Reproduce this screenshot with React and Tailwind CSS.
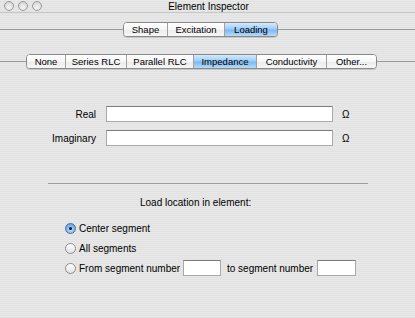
import React from "react";

const topTabs = [
  { label: "Shape", w: "w-[43px]" },
  { label: "Excitation", w: "w-[57px]" },
  { label: "Loading", w: "w-[53px]", on: true },
];

const loadTabs = [
  { label: "None", w: "w-[38px]" },
  { label: "Series RLC", w: "w-[61px]" },
  { label: "Parallel RLC", w: "w-[67px]" },
  { label: "Impedance", w: "w-[63px]", on: true },
  { label: "Conductivity", w: "w-[70px]" },
  { label: "Other...", w: "w-[50px]" },
];

function Segmented({ tabs }) {
  return (
    <div className="flex h-[15px] rounded-[4px] border border-[#8a8a8a] bg-white overflow-hidden shadow-[0_1px_0_rgba(0,0,0,0.12)]">
      {tabs.map((t, i) => (
        <div
          key={t.label}
          className={`${t.w} flex items-center justify-center text-[9.5px] leading-none text-black ${
            i > 0 ? "border-l border-[#a0a0a0]" : ""
          } ${
            t.on
              ? "bg-[linear-gradient(#d4eafd,#9fcdf6_45%,#7cb9f0_55%,#b4dcfc)]"
              : "bg-[linear-gradient(#ffffff,#f6f6f6_50%,#ececec_55%,#f7f7f7)]"
          }`}
        >
          {t.label}
        </div>
      ))}
    </div>
  );
}

function Light() {
  return (
    <div className="w-[10px] h-[10px] rounded-full border border-[#9a9a9a] bg-[radial-gradient(circle_at_50%_70%,#f4f4f4,#cfcfcf)]" />
  );
}

function Field({ label }) {
  return (
    <div className="flex items-center h-[16px]">
      <div className="w-[96px] text-right text-[10px]">{label}</div>
      <div className="ml-[10px] w-[227px] h-[16px] bg-white border border-[#a8a8a8] border-t-[#7d7d7d]" />
      <div className="ml-[9px] text-[10px]">Ω</div>
    </div>
  );
}

function Radio({ on }) {
  return (
    <div
      className={`w-[11px] h-[11px] rounded-full border flex items-center justify-center ${
        on
          ? "border-[#3f6fa8] bg-[radial-gradient(circle_at_50%_65%,#bfe0fb,#4c95e0)]"
          : "border-[#8c8c8c] bg-[linear-gradient(#ffffff,#e2e2e2)]"
      }`}
    >
      {on && <div className="w-[3px] h-[3px] rounded-full bg-[#111]" />}
    </div>
  );
}

export default function App() {
  return (
    <div
      className="w-[415px] h-[318px] overflow-hidden text-black bg-[repeating-linear-gradient(0deg,#e2e2e2_0px,#e2e2e2_1px,#e8e8e8_1px,#e8e8e8_2px)]"
      style={{ fontFamily: '"Liberation Sans", Arial, sans-serif' }}
    >
      <div className="relative h-[13px] border-b border-[#c8c8c8] flex items-center">
        <div className="flex gap-[4px] pl-[4px]">
          <Light />
          <Light />
          <Light />
        </div>
        <div className="absolute inset-0 flex items-center justify-center text-[10px] pl-[2px]">
          Element Inspector
        </div>
      </div>

      <div className="mt-[9px] flex items-center">
        <div className="w-[123px] h-px bg-[#9a9a9a]" />
        <Segmented tabs={topTabs} />
        <div className="flex-1 h-px bg-[#9a9a9a]" />
      </div>

      <div className="mt-[17px] flex items-center">
        <div className="w-[26px] h-px bg-[#9a9a9a]" />
        <Segmented tabs={loadTabs} />
        <div className="flex-1 h-px bg-[#9a9a9a]" />
      </div>

      <div className="mt-[37px] flex flex-col gap-[8px]">
        <Field label="Real" />
        <Field label="Imaginary" />
      </div>

      <div className="mt-[37px] ml-[48px] w-[320px] h-px bg-[#9c9c9c]" />

      <div className="mt-[11px] pl-[140px] text-[10px]">Load location in element:</div>

      <div className="mt-[12px] pl-[65px] flex flex-col gap-[8px] text-[10px]">
        <div className="flex items-center gap-[3px] h-[12px]">
          <Radio on />
          <span>Center segment</span>
        </div>
        <div className="flex items-center gap-[3px] h-[12px]">
          <Radio />
          <span>All segments</span>
        </div>
        <div className="flex items-center h-[12px]">
          <Radio />
          <span className="ml-[3px] w-[104px]">From segment number</span>
          <div className="w-[38px] h-[16px] bg-white border border-[#a8a8a8] border-t-[#7d7d7d]" />
          <span className="ml-[6px] w-[90px]">to segment number</span>
          <div className="w-[39px] h-[16px] bg-white border border-[#a8a8a8] border-t-[#7d7d7d]" />
        </div>
      </div>
    </div>
  );
}
